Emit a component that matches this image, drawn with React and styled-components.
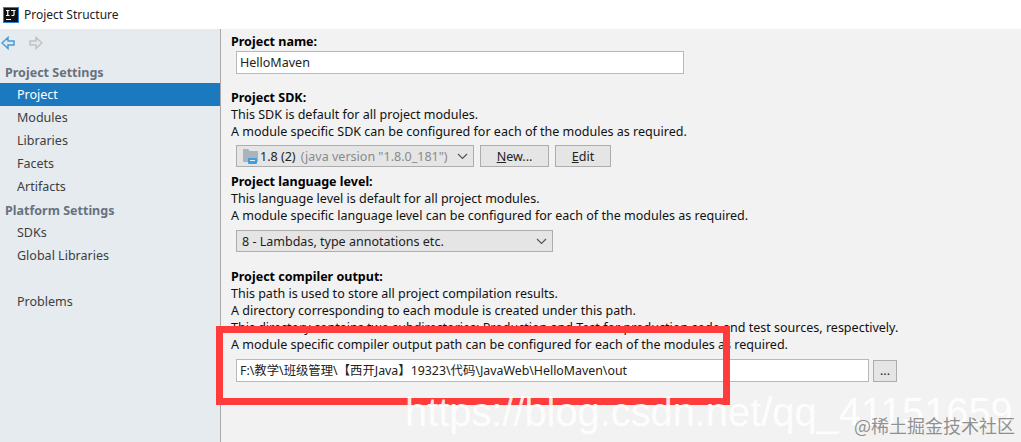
import React from 'react';
import styled, { createGlobalStyle } from 'styled-components';

const GlobalStyle = createGlobalStyle`
  html, body { margin: 0; padding: 0; background: #f2f2f2; }
  body { font-family: "Noto Sans", "Noto Sans CJK SC", sans-serif; font-size: 12.52px; color: #111; }
  * { box-sizing: border-box; }
`;

const Page = styled.div`
  position: relative;
  width: 1021px;
  height: 442px;
  overflow: hidden;
`;

const TitleBar = styled.div`
  height: 29px;
  background: #fff;
  display: flex;
  align-items: center;
  padding-left: 3px;
  gap: 5px;
  font-size: 12px;
  color: #222;
`;

const Body = styled.div`
  display: flex;
  height: 413px;
`;

const Sidebar = styled.div`
  width: 221px;
  background: #e6ebf0;
  border-right: 1px solid #a9a9a9;
  flex-shrink: 0;
`;

const NavIcons = styled.div`
  height: 28px;
  display: flex;
  align-items: center;
  gap: 14px;
  padding-left: 1px;
`;

const SectionTitle = styled.div`
  height: 23px;
  line-height: 25px;
  padding-left: 5px;
  font-weight: 700;
  color: #68717c;
  margin-top: ${p => p.$top || 0}px;
`;

const NavItem = styled.div`
  height: 23px;
  line-height: 23px;
  padding-left: 17px;
  color: ${p => (p.$active ? '#fff' : '#3c3f41')};
  background: ${p => (p.$active ? '#1b79c0' : 'transparent')};
  margin-top: ${p => (p.$gap ? '23px' : '0')};
`;

const Content = styled.div`
  flex: 1;
  padding: 4px 0 0 10px;
`;

const Label = styled.div`
  height: 17px;
  line-height: 17px;
  font-weight: 700;
  color: #000;
  margin-top: ${p => p.$top || 0}px;
`;

const Line = styled.div`
  height: 17px;
  line-height: 17px;
  color: #111;
  white-space: nowrap;
`;

const TextInput = styled.div`
  height: 23px;
  line-height: 21px;
  background: #fff;
  border: 1px solid #b9b9b9;
  padding-left: 3px;
  color: #222;
  width: ${p => p.$width}px;
  white-space: nowrap;
`;

const PathInput = styled(TextInput)`
  font-size: 12.36px;
`;

const Row = styled.div`
  display: flex;
  align-items: center;
  gap: ${p => p.$gap || 6}px;
  margin-top: ${p => p.$top || 0}px;
  padding-left: 5px;
`;

const Select = styled.div`
  height: 22px;
  width: ${p => p.$width}px;
  background: #e5e5e5;
  border: 1px solid #adadad;
  display: flex;
  align-items: center;
  padding: 0 5px 0 ${p => (p.$icon ? 6 : 5)}px;
  gap: 2px;
  color: #222;
  white-space: pre;
`;

const Muted = styled.span`
  color: #8a8a8a;
`;

const Chevron = styled.svg`
  margin-left: auto;
  flex-shrink: 0;
`;

const Button = styled.div`
  height: 22px;
  width: ${p => p.$width}px;
  background: #e5e5e5;
  border: 1px solid #adadad;
  display: flex;
  align-items: center;
  justify-content: center;
  color: #222;
  u { text-decoration: underline; }
`;

const RedBox = styled.div`
  position: absolute;
  left: 216px;
  top: 326px;
  width: 514px;
  height: 79px;
  border: 7px solid #ff3b3b;
`;

const Watermark = styled.div`
  position: absolute;
  left: 405px;
  top: 389px;
  font-family: "Liberation Sans", sans-serif;
  font-size: 39.8px;
  line-height: 46px;
  color: rgba(255, 255, 255, 0.88);
  white-space: nowrap;
`;

const Badge = styled.div`
  position: absolute;
  right: 6px;
  top: 413px;
  font-family: "Noto Sans CJK SC", sans-serif;
  font-size: 18px;
  line-height: 24px;
  color: rgba(110, 110, 110, 0.75);
  white-space: nowrap;
`;

const AppLogo = () => (
  <svg width="16" height="16" viewBox="0 0 16 16" style={{ display: 'block' }}>
    <rect x="0.5" y="0.5" width="15" height="15" fill="#111" stroke="#2a7fe0" />
    <path d="M3 3.500h3.500M4.750 3.500v5M3 8.500h3.500M8 3.500h4.500M11 3.500v4q0 1-1 1h-1.500" stroke="#fff" strokeWidth="1.200" fill="none" />
    <path d="M3 12.500h5" stroke="#fff" />
  </svg>
);

const ArrowLeft = () => (
  <svg width="14" height="14" viewBox="0 0 14 14">
    <path d="M1 7l6-5.500v3.500h6v4h-6v3.500z" fill="#dbe9f5" stroke="#4b9ad0" strokeWidth="1.500" />
  </svg>
);

const ArrowRight = () => (
  <svg width="14" height="14" viewBox="0 0 14 14">
    <path d="M13 7l-6-5.500v3.500h-6v4h6v3.500z" fill="#e4e6e8" stroke="#c2c2c2" strokeWidth="1.500" />
  </svg>
);

const Folder = () => (
  <svg width="15" height="15" viewBox="0 0 15 15" style={{ flexShrink: 0 }}>
    <path d="M0 0h5l2 2h8v11h-15z" fill="#a9b4bd" />
    <rect x="5" y="9" width="9" height="6" rx="1" fill="#3f9fdc" />
    <path d="M7 11.500h5" stroke="#dff0fb" />
  </svg>
);

const Caret = () => (
  <Chevron width="11" height="7" viewBox="0 0 11 7">
    <path d="M1 1l4.500 4.500 4.500-4.500" fill="none" stroke="#555" strokeWidth="1.200" />
  </Chevron>
);

export default function App() {
  return (
    <Page>
      <GlobalStyle />
      <TitleBar>
        <AppLogo />
        Project Structure
      </TitleBar>
      <Body>
        <Sidebar>
          <NavIcons>
            <ArrowLeft />
            <ArrowRight />
          </NavIcons>
          <SectionTitle $top={3}>Project Settings</SectionTitle>
          <NavItem $active>Project</NavItem>
          <NavItem>Modules</NavItem>
          <NavItem>Libraries</NavItem>
          <NavItem>Facets</NavItem>
          <NavItem>Artifacts</NavItem>
          <SectionTitle>Platform Settings</SectionTitle>
          <NavItem>SDKs</NavItem>
          <NavItem>Global Libraries</NavItem>
          <NavItem $gap>Problems</NavItem>
        </Sidebar>
        <Content>
          <Label>Project name:</Label>
          <Row $top={1}><TextInput $width={448}>HelloMaven</TextInput></Row>
          <Label $top={15}>Project SDK:</Label>
          <Line>This SDK is default for all project modules.</Line>
          <Line>A module specific SDK can be configured for each of the modules as required.</Line>
          <Row $top={5}>
            <Select $width={238} $icon>
              <Folder />
              1.8 (2) <Muted>(java version "1.8.0_181")</Muted>
              <Caret />
            </Select>
            <Button $width={69}><span><u>N</u>ew...</span></Button>
            <Button $width={56}><span><u>E</u>dit</span></Button>
          </Row>
          <Label $top={6}>Project language level:</Label>
          <Line>This language level is default for all project modules.</Line>
          <Line>A module specific language level can be configured for each of the modules as required.</Line>
          <Row $top={6}>
            <Select $width={317}>
              8 - Lambdas, type annotations etc.
              <Caret />
            </Select>
          </Row>
          <Label $top={16}>Project compiler output:</Label>
          <Line>This path is used to store all project compilation results.</Line>
          <Line>A directory corresponding to each module is created under this path.</Line>
          <Line>This directory contains two subdirectories: Production and Test for production code and test sources, respectively.</Line>
          <Line>A module specific compiler output path can be configured for each of the modules as required.</Line>
          <Row $top={6} $gap={4}>
            <PathInput $width={633}>F:\教学\班级管理\【西开Java】19323\代码\JavaWeb\HelloMaven\out</PathInput>
            <Button $width={24}>...</Button>
          </Row>
        </Content>
      </Body>
      <RedBox />
      <Watermark>https://blog.csdn.net/qq_41151659</Watermark>
      <Badge>@稀土掘金技术社区</Badge>
    </Page>
  );
}
